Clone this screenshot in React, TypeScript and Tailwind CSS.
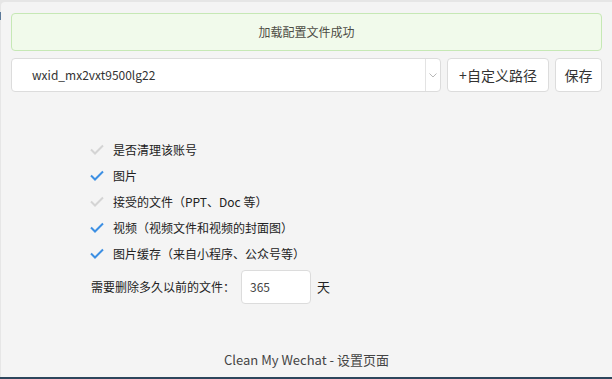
import React from 'react';

const font = { fontFamily: '"Microsoft YaHei", "Noto Sans CJK SC", sans-serif' };

const options = [
  { label: '是否清理该账号', checked: false },
  { label: '图片', checked: true },
  { label: '接受的文件（PPT、Doc 等）', checked: false },
  { label: '视频（视频文件和视频的封面图）', checked: true },
  { label: '图片缓存（来自小程序、公众号等）', checked: true },
];

const Check: React.FC<{ on: boolean }> = ({ on }) => (
  <svg width="14" height="11" viewBox="0 0 14 11" className="shrink-0">
    <polyline
      points="1,5.5 5,9.5 13,1.5"
      fill="none"
      stroke={on ? '#3c8fe3' : '#d4d4d4'}
      strokeWidth="2"
    />
  </svg>
);

export default function App() {
  return (
    <div className="w-[612px] h-[379px] bg-[#e6e6e6] relative overflow-hidden" style={font}>
      {/* edges of the window behind */}
      <div className="absolute left-0 bottom-0 w-full h-[2px] bg-[#2d465c]" />
      <div className="absolute left-0 top-[12px] w-[2px] h-[8px] bg-[#5d7a9a]" />
      <div className="absolute inset-x-0 top-[2px] bottom-[2px] left-[1px] bg-[#f4f4f4] rounded-tl-[4px] flex flex-col">
        <div className="mx-[10px] mt-[11px] h-[38px] rounded-[4px] border border-[#c6e8b5] bg-[#f1faeb] flex items-center justify-center text-[12px] text-[#4d4d45]">
          加载配置文件成功
        </div>

        <div className="mx-[10px] mt-[7px] flex gap-[6px] h-[34px]">
          <div className="w-[430px] flex bg-white border border-[#dcdcdc] rounded-[4px]">
            <div className="flex-1 flex items-center pl-[20px] text-[12px] text-[#333]">wxid_mx2vxt9500lg22</div>
            <div className="w-[15px] border-l border-[#e3e3e3] flex items-center justify-center">
              <svg width="8" height="5" viewBox="0 0 8 5">
                <polyline points="0.5,0.5 4,4 7.5,0.5" fill="none" stroke="#b8b8b8" strokeWidth="1" />
              </svg>
            </div>
          </div>
          <button className="w-[102px] bg-white border border-[#dcdcdc] rounded-[4px] text-[14px] text-[#333]">+自定义路径</button>
          <button className="w-[47px] bg-white border border-[#dcdcdc] rounded-[4px] text-[14px] text-[#333]">保存</button>
        </div>

        <div className="ml-[89px] mt-[48px] flex flex-col gap-[7px]">
          {options.map(o => (
            <div key={o.label} className="h-[19px] flex items-center gap-[9px] text-[12px] text-[#222]">
              <Check on={o.checked} />
              <span>{o.label}</span>
            </div>
          ))}
        </div>

        <div className="ml-[90px] mt-[7px] flex items-center text-[12px] text-[#222]">
          <span className="w-[150px]">需要删除多久以前的文件：</span>
          <div className="w-[70px] h-[34px] bg-white border border-[#dcdcdc] rounded-[4px] flex items-center pl-[8px] text-[12px] text-[#444]">365</div>
          <span className="ml-[6px] text-[13px]">天</span>
        </div>

        <div className="mt-auto mb-[8px] text-center text-[13px] text-[#444]">Clean My Wechat - 设置页面</div>
      </div>
    </div>
  );
}
